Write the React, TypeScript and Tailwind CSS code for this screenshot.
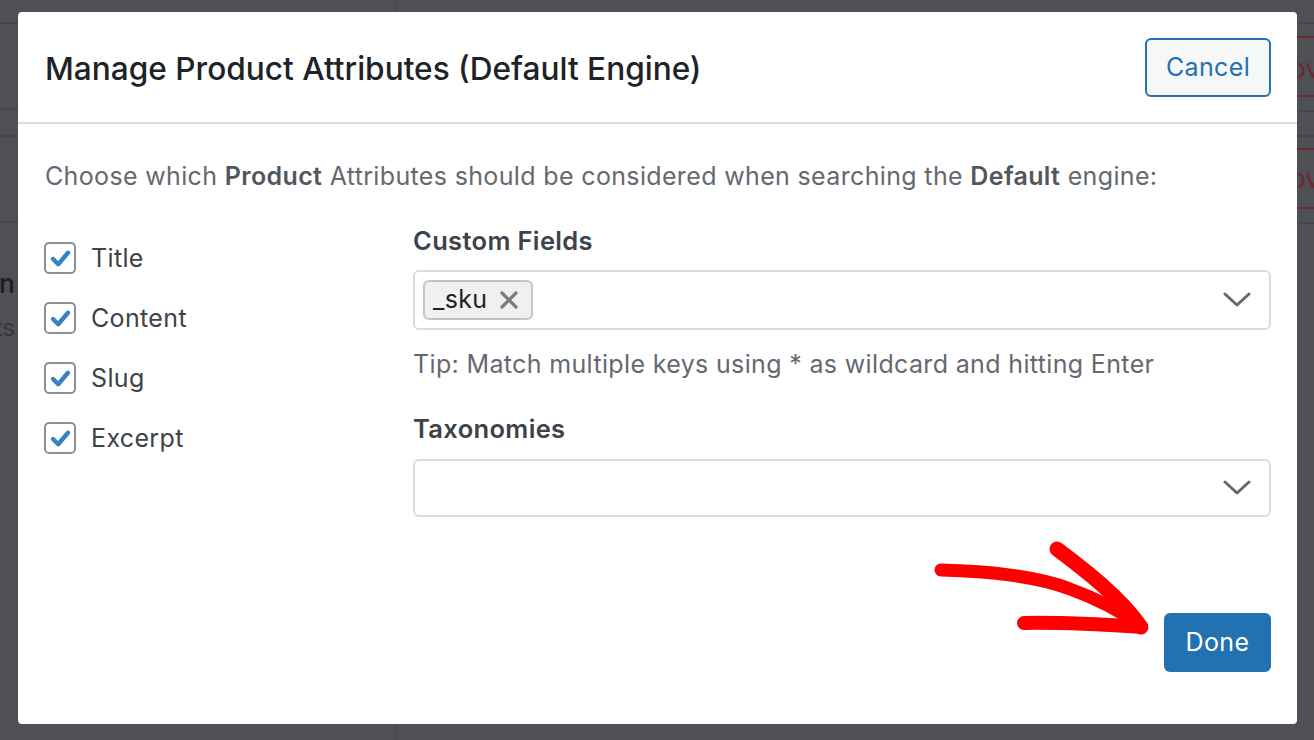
import React, { useState } from 'react';

const font = { fontFamily: 'Inter, "Noto Sans", "Liberation Sans", sans-serif' };

const Check = () => (
  <svg viewBox="0 0 20 20" className="w-[23px] h-[23px]" fill="none">
    <path d="M3.5 10.5 L8 15 L16.5 5" stroke="#3582c4" strokeWidth="3.8" strokeLinecap="round" strokeLinejoin="round" />
  </svg>
);

const Chevron = () => (
  <svg viewBox="0 0 28 16" className="w-[28px] h-[16px]" fill="none">
    <path d="M2 2 L14 13 L26 2" stroke="#646970" strokeWidth="3" strokeLinecap="round" strokeLinejoin="round" />
  </svg>
);

const attributes = ['Title', 'Content', 'Slug', 'Excerpt'];

export default function App() {
  const [checked, setChecked] = useState<Record<string, boolean>>({
    Title: true,
    Content: true,
    Slug: true,
    Excerpt: true,
  });
  const [tags, setTags] = useState(['_sku']);

  return (
    <div className="relative w-[1314px] h-[740px] overflow-hidden bg-[#4f5056]" style={font}>
      {/* page behind the overlay */}
      <div className="flex h-full">
        <div className="w-[396px] border-r border-[#45464b] flex flex-col">
          <div className="h-[24px] border-b-2 border-[#45464b]" />
          <div className="h-[86px] border-b-2 border-[#45464b]" />
          <div className="h-[27px] border-b-2 border-[#45464b]" />
          <div className="h-[86px] border-b-2 border-[#45464b]" />
          <div className="pt-[43px] text-[26px] font-semibold text-[#1f2024] leading-[36px] -ml-[1px]">n</div>
          <div className="pt-[10px] text-[24px] text-[#36373c] leading-[32px] -ml-[5px]">ts</div>
        </div>
        <div className="flex-1 flex flex-col">
          <div className="h-[24px] border-b-2 border-[#45464b]" />
          <div className="h-[14px] border-b-2 border-[#6f2a2d]" />
          <div className="h-[59px] border-b-2 border-[#6f2a2d] flex items-center justify-end pt-[4px] text-[26px] text-[#6b2a2e] -mr-[6px]">Remov</div>
          <div className="h-[15px] border-b-2 border-[#45464b]" />
          <div className="h-[25px] border-b-2 border-[#45464b]" />
          <div className="h-[13px] border-b-2 border-[#6f2a2d]" />
          <div className="h-[59px] border-b-2 border-[#6f2a2d] flex items-center justify-end text-[26px] text-[#6b2a2e] -mr-[6px]">Remov</div>
          <div className="h-[15px] border-b-2 border-[#45464b]" />
        </div>
      </div>

      {/* modal */}
      <div className="absolute left-[18px] top-[12px] w-[1279px] h-[712px] bg-white rounded-[4px] flex flex-col">
        <div className="h-[112px] border-b-2 border-[#dcdcde] flex items-center justify-between pl-[27px] pr-[26px]">
          <h1 className="pt-[3px] text-[31.6px] font-medium text-[#1d2327] leading-[40px]">
            Manage Product Attributes (Default Engine)
          </h1>
          <button className="mt-[1px] w-[126px] h-[59px] border-2 border-[#2271b1] rounded-[6px] bg-[#f6f7f7] text-[25px] tracking-[0.35px] text-[#2271b1]">
            Cancel
          </button>
        </div>

        <div className="pl-[27px] pr-[26px] pt-[36px] flex flex-col text-[25px] tracking-[0.35px]">
          <p className="leading-[32px] text-[#646970]">
            Choose which <strong className="font-semibold text-[#50575e]">Product</strong> Attributes should be considered when searching the{' '}
            <strong className="font-semibold text-[#50575e]">Default</strong> engine:
          </p>

          <div className="flex mt-[33px]">
            <div className="w-[368px] pt-[17px] flex flex-col gap-[28px]">
              {attributes.map((a) => (
                <label key={a} className="h-[32px] flex items-center gap-[15px] cursor-pointer">
                  <span
                    onClick={() => setChecked({ ...checked, [a]: !checked[a] })}
                    className="w-[32px] h-[32px] border-2 border-[#8c8f94] rounded-[5px] flex items-center justify-center bg-white -ml-[1px]"
                  >
                    {checked[a] && <Check />}
                  </span>
                  <span className="text-[#3c434a] leading-[32px]">{a}</span>
                </label>
              ))}
            </div>

            <div className="flex-1 flex flex-col">
              <div className="text-[25.5px] font-semibold text-[#3c434a] leading-[32px]">Custom Fields</div>
              <div className="mt-[13px] h-[60px] border-2 border-[#dcdcde] rounded-[6px] flex items-center pl-[8px] pr-[18px]">
                <div className="flex-1 flex gap-2">
                  {tags.map((t) => (
                    <span
                      key={t}
                      className="h-[40px] pl-[8px] pr-[12px] bg-[#f0f0f1] border-2 border-[#c3c4c7] rounded-[6px] flex items-center gap-[11px] text-[#1d2327]"
                    >
                      {t}
                      <svg
                        viewBox="0 0 20 20"
                        className="w-[20px] h-[20px] cursor-pointer"
                        onClick={() => setTags(tags.filter((x) => x !== t))}
                      >
                        <path d="M3 3 L17 17 M17 3 L3 17" stroke="#787c82" strokeWidth="3.2" strokeLinecap="round" />
                      </svg>
                    </span>
                  ))}
                </div>
                <Chevron />
              </div>
              <p className="mt-[18px] text-[#646970] leading-[32px]">
                Tip: Match multiple keys using * as wildcard and hitting Enter
              </p>

              <div className="mt-[33px] text-[25.5px] font-semibold text-[#3c434a] leading-[32px]">Taxonomies</div>
              <div className="mt-[14px] h-[58px] border-2 border-[#dcdcde] rounded-[6px] flex items-center justify-end pr-[18px]">
                <Chevron />
              </div>

              <div className="mt-[96px] flex justify-end">
                <button className="w-[107px] h-[59px] bg-[#2271b1] rounded-[6px] text-white">Done</button>
              </div>
            </div>
          </div>
        </div>
      </div>

      {/* hand-drawn annotation arrow */}
      <svg className="absolute left-[920px] top-[535px] w-[240px] h-[110px]" viewBox="0 0 240 110" fill="none">
        <path
          d="M21 35 C 70 36, 120 42, 150 54 C 175 63, 200 76, 220 90"
          stroke="#ff0000"
          strokeWidth="13"
          strokeLinecap="round"
          strokeLinejoin="round"
        />
        <path
          d="M137 14 C 165 35, 200 62, 221 92"
          stroke="#ff0000"
          strokeWidth="15"
          strokeLinecap="round"
        />
        <path
          d="M104 88 C 145 87, 190 90, 221 92"
          stroke="#ff0000"
          strokeWidth="14"
          strokeLinecap="round"
        />
      </svg>
    </div>
  );
}
